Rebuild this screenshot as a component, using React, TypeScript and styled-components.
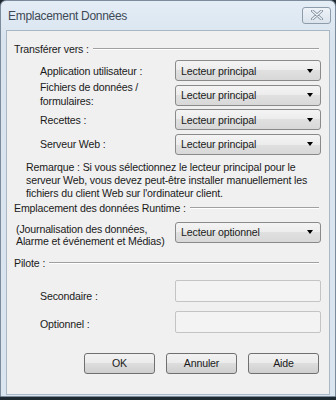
import styled, { createGlobalStyle } from 'styled-components'

const GlobalStyle = createGlobalStyle`
  html, body {
    margin: 0;
    padding: 0;
    background: #1e2830;
  }
  body {
    font-family: 'Liberation Sans', Arial, sans-serif;
  }
`

const Window = styled.div`
  box-sizing: border-box;
  width: 336px;
  height: 397px;
  display: flex;
  flex-direction: column;
  border: 1px solid #7d8c9c;
  border-radius: 6px 6px 0 0;
  background: linear-gradient(#e4edf6, #d9e4ef 40px, #dbe5ef);
`

const TitleBar = styled.div`
  height: 29px;
  display: flex;
  align-items: center;
  justify-content: space-between;
  padding: 0 4px 0 7px;
  flex-shrink: 0;
`

const Title = styled.span`
  font-size: 12px;
  letter-spacing: -0.3px;
  color: #3d4956;
`

const CloseButton = styled.div`
  width: 27px;
  height: 15px;
  margin-top: -1px;
  border: 1px solid #8d9cab;
  border-radius: 3px;
  background: linear-gradient(#eef3f8, #dbe3ec);
  display: flex;
  align-items: center;
  justify-content: center;
`

const Body = styled.div`
  flex: 1;
  margin: 0 5px 1px 5px;
  border: 1px solid #a9b8c6;
  background: #f0f0f0;
  padding: 11px 8px 0 7px;
  font-size: 10.6px;
  letter-spacing: -0.15px;
  color: #1a1a1a;
`

const SectionHeader = styled.div<{ $top?: number }>`
  display: flex;
  align-items: center;
  gap: 4px;
  height: 14px;
  margin-top: ${p => p.$top ?? 0}px;
  &::after {
    content: '';
    flex: 1;
    border-top: 1px solid #a0a0a0;
    border-bottom: 1px solid #ffffff;
    margin-right: 2px;
  }
`

const FieldGrid = styled.div<{ $top?: number; $gap?: number; $row?: number }>`
  display: grid;
  grid-template-columns: 1fr 146px;
  grid-auto-rows: ${p => p.$row ?? 21}px;
  row-gap: ${p => p.$gap ?? 3.5}px;
  margin-top: ${p => p.$top ?? 0}px;
  align-items: center;
`

const Label = styled.div<{ $indent?: number; $shift?: number; $lh?: number }>`
  padding-left: ${p => p.$indent ?? 26}px;
  line-height: ${p => p.$lh ?? 14}px;
  position: relative;
  top: ${p => p.$shift ?? 0}px;
`

const Select = styled.div`
  box-sizing: border-box;
  height: 21px;
  border: 1px solid #8a8a8a;
  border-radius: 3px;
  background: linear-gradient(#f4f4f4, #ececec 50%, #e0e0e0 50%, #d8d8d8);
  display: flex;
  align-items: center;
  justify-content: space-between;
  padding: 0 7px 0 5px;
`

const Arrow = styled.span`
  width: 0;
  height: 0;
  border-left: 3.5px solid transparent;
  border-right: 3.5px solid transparent;
  border-top: 4px solid #000;
`

const TextBox = styled.div`
  box-sizing: border-box;
  height: 22px;
  border: 1px solid #c4c4c4;
  border-radius: 2px;
  background: #f3f3f3;
`

const Note = styled.p`
  margin: 6px 0 1px 12px;
  line-height: 13px;
`

const ButtonRow = styled.div`
  display: flex;
  justify-content: flex-end;
  gap: 11px;
  margin-top: 20px;
  padding-right: 2px;
`

const Button = styled.div`
  box-sizing: border-box;
  width: 71px;
  height: 21px;
  border: 1px solid #707070;
  border-radius: 3px;
  background: linear-gradient(#f2f2f2, #ebebeb 50%, #dddddd 50%, #cfcfcf);
  display: flex;
  align-items: center;
  justify-content: center;
`

const DropDown = ({ value }: { value: string }) => (
  <Select>
    <span>{value}</span>
    <Arrow />
  </Select>
)

const App = () => (
  <>
    <GlobalStyle />
    <Window>
      <TitleBar>
        <Title>Emplacement Données</Title>
        <CloseButton>
          <svg width="12" height="10" viewBox="0 0 12 10">
            <path
              d="M1.5 1 L10.5 9 M10.5 1 L1.5 9"
              stroke="#8593a2"
              strokeWidth="3"
              strokeLinecap="round"
            />
            <path
              d="M1.5 1 L10.5 9 M10.5 1 L1.5 9"
              stroke="#f4f7fa"
              strokeWidth="1.2"
              strokeLinecap="round"
            />
          </svg>
        </CloseButton>
      </TitleBar>
      <Body>
        <SectionHeader>Transférer vers :</SectionHeader>
        <FieldGrid $top={4}>
          <Label>Application utilisateur :</Label>
          <DropDown value="Lecteur principal" />
          <Label $shift={-1}>
            Fichiers de données /
            <br />
            formulaires:
          </Label>
          <DropDown value="Lecteur principal" />
          <Label>Recettes :</Label>
          <DropDown value="Lecteur principal" />
          <Label>Serveur Web :</Label>
          <DropDown value="Lecteur principal" />
        </FieldGrid>
        <Note>
          Remarque : Si vous sélectionnez le lecteur principal pour le
          serveur Web, vous devez peut-être installer manuellement les
          fichiers du client Web sur l'ordinateur client.
        </Note>
        <SectionHeader>Emplacement des données Runtime :</SectionHeader>
        <FieldGrid $top={7}>
          <Label $indent={2} $shift={3} $lh={12}>
            (Journalisation des données,
            <br />
            Alarme et événement et Médias)
          </Label>
          <DropDown value="Lecteur optionnel" />
        </FieldGrid>
        <SectionHeader $top={13}>Pilote :</SectionHeader>
        <FieldGrid $top={10} $gap={9} $row={22}>
          <Label $shift={5}>Secondaire :</Label>
          <TextBox />
          <Label $shift={2}>Optionnel :</Label>
          <TextBox />
        </FieldGrid>
        <ButtonRow>
          <Button>OK</Button>
          <Button>Annuler</Button>
          <Button>Aide</Button>
        </ButtonRow>
      </Body>
    </Window>
  </>
)

export default App
